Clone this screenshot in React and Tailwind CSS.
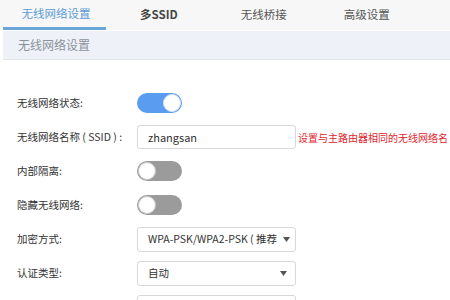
import React from "react";

const font = { fontFamily: '"Microsoft YaHei","Noto Sans CJK SC","Noto Sans",sans-serif' };

function Toggle({ on }) {
  return on ? (
    <div className="shrink-0 w-[45px] h-[20px] rounded-full bg-[#5a9cf0] flex items-center justify-end pr-[1px]">
      <div className="w-[18px] h-[18px] rounded-full bg-white border border-[#d9e6f7]" />
    </div>
  ) : (
    <div className="shrink-0 w-[45px] h-[20px] rounded-full bg-[#9b9b9b] flex items-center pl-[1px]">
      <div className="w-[18px] h-[18px] rounded-full bg-white border border-[#c8c8c8]" />
    </div>
  );
}

function Select({ text }) {
  return (
    <div className="shrink-0 w-[159px] h-[25px] border border-[#d8d8d8] rounded-[3px] bg-white flex items-center gap-[6px] pl-[10px] pr-[8px] text-[10.5px] text-[#333]">
      <span className="flex-1 whitespace-nowrap">{text}</span>
      <svg className="shrink-0" width="7" height="5" viewBox="0 0 7 5"><path d="M0 0h7L3.5 5z" fill="#555" /></svg>
    </div>
  );
}

function Row({ label, children }) {
  return (
    <div className="flex items-center h-[34px]">
      <div className="shrink-0 w-[137px] pl-[17px] text-[10.5px] text-[#333] whitespace-nowrap">{label}</div>
      {children}
    </div>
  );
}

export default function App() {
  return (
    <div className="w-[450px] h-[300px] overflow-hidden bg-white" style={font}>
      <div className="h-[30px] bg-[#f7f7f7] flex items-end">
        <div className="shrink-0 ml-[3px] w-[103px] h-[30px] flex flex-col">
          <div className="flex-1 flex items-center justify-center pl-[3px] text-[11.5px] text-[#5b9bd5]">无线网络设置</div>
          <div className="h-[3px] bg-[#6aa6d8]" />
        </div>
        <div className="shrink-0 h-[30px] flex items-center ml-[34px] text-[11.5px] font-bold text-[#444]">多SSID</div>
        <div className="shrink-0 h-[30px] flex items-center ml-[63px] text-[11.5px] text-[#555]">无线桥接</div>
        <div className="shrink-0 h-[30px] flex items-center ml-[57px] text-[11.5px] text-[#555]">高级设置</div>
      </div>
      <div className="ml-[3px] mt-[1px] h-[29px] bg-[#eef2f8] border-b border-[#e3e8ef] flex items-center pl-[15px] text-[12px] text-[#8b929b]">
        无线网络设置
      </div>
      <div className="pt-[26px]">
        <Row label="无线网络状态:"><Toggle on /></Row>
        <Row label="无线网络名称 ( SSID ) :">
          <div className="shrink-0 w-[159px] h-[24px] border border-[#d8d8d8] rounded-[3px] bg-white flex items-center pl-[10px] text-[11px] text-[#333]">zhangsan</div>
          <span className="shrink-0 ml-[2px] text-[10px] text-[#e0262e] whitespace-nowrap">设置与主路由器相同的无线网络名</span>
        </Row>
        <Row label="内部隔离:"><Toggle /></Row>
        <Row label="隐藏无线网络:"><Toggle /></Row>
        <Row label="加密方式:"><Select text="WPA-PSK/WPA2-PSK ( 推荐" /></Row>
        <Row label="认证类型:"><Select text="自动" /></Row>
        <Row label=""><Select text="" /></Row>
      </div>
    </div>
  );
}
